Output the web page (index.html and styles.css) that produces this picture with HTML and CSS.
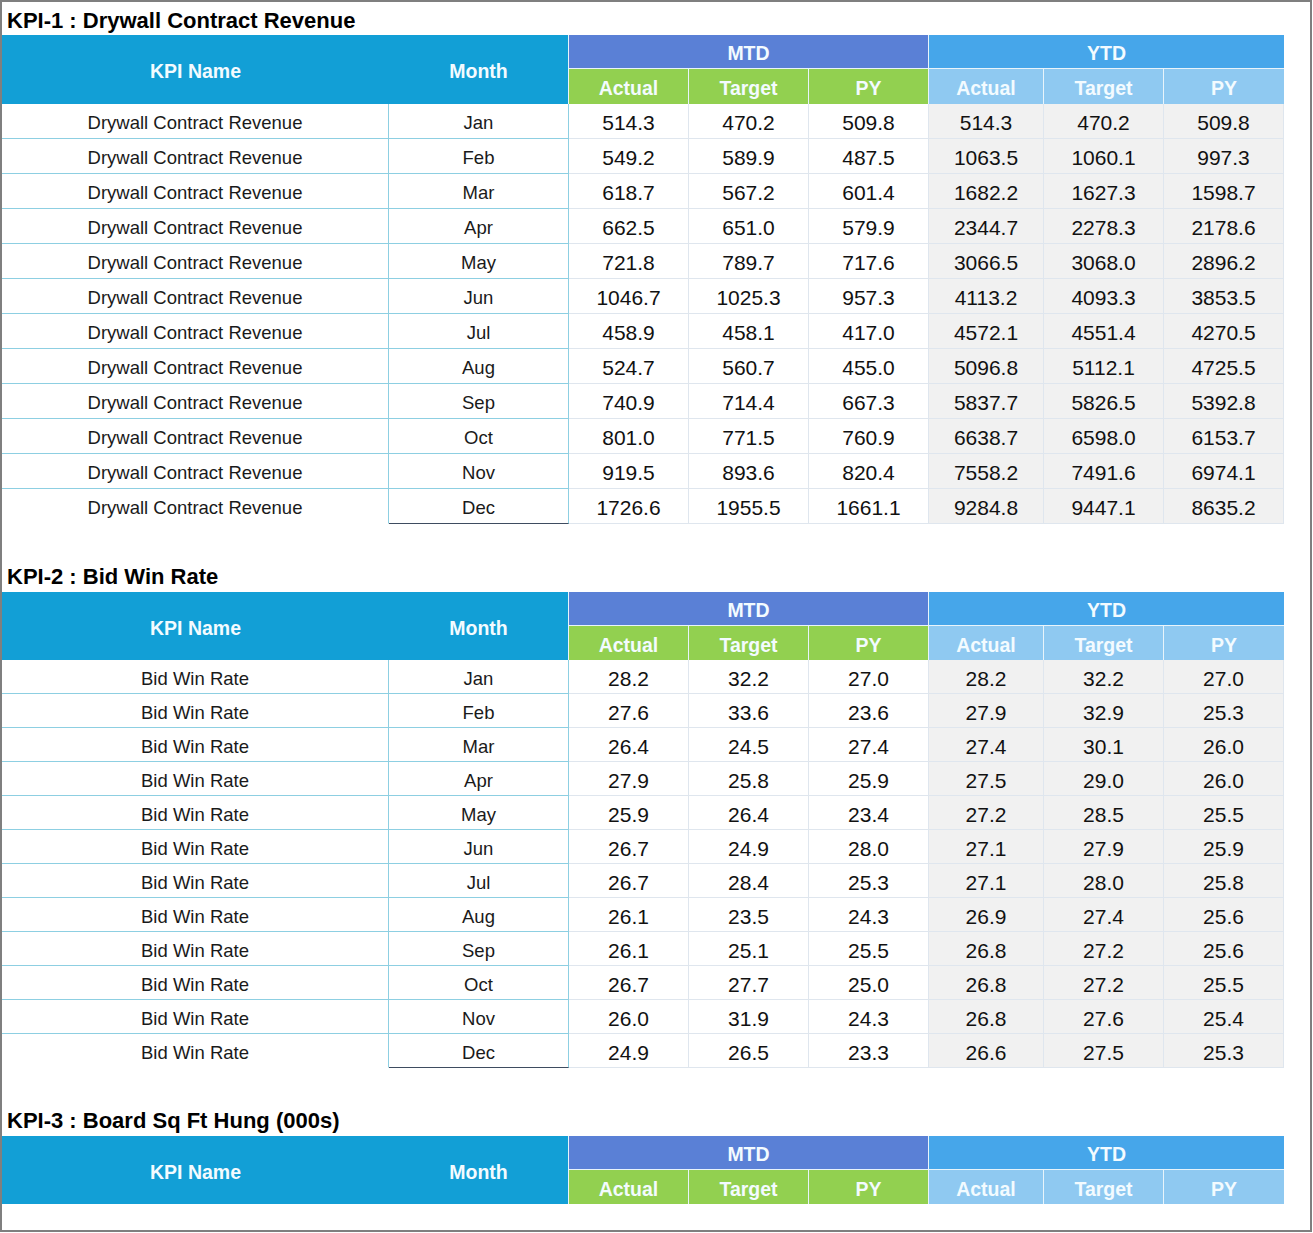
FILE: index.html
```html
<!DOCTYPE html>
<html lang="en">
<head>
<meta charset="utf-8">
<title>KPI Tables</title>
<link rel="stylesheet" href="styles.css">
</head>
<body>
<div class="sheet">

  <section class="kpi">
    <h2 class="kpi-title kpi-title--first">KPI-1 : Drywall Contract Revenue</h2>
    <div class="grid">
      <div class="h h-name">KPI Name</div>
      <div class="h h-month">Month</div>
      <div class="h h-mtd">MTD</div>
      <div class="h h-ytd">YTD</div>
      <div class="h h-sub-m">Actual</div><div class="h h-sub-m">Target</div><div class="h h-sub-m">PY</div>
      <div class="h h-sub-y">Actual</div><div class="h h-sub-y">Target</div><div class="h h-sub-y h-end">PY</div>

      <div class="c c-name">Drywall Contract Revenue</div><div class="c c-month">Jan</div><div class="c c-num">514.3</div><div class="c c-num">470.2</div><div class="c c-num">509.8</div><div class="c c-num c-ytd">514.3</div><div class="c c-num c-ytd">470.2</div><div class="c c-num c-ytd">509.8</div>
      <div class="c c-name">Drywall Contract Revenue</div><div class="c c-month">Feb</div><div class="c c-num">549.2</div><div class="c c-num">589.9</div><div class="c c-num">487.5</div><div class="c c-num c-ytd">1063.5</div><div class="c c-num c-ytd">1060.1</div><div class="c c-num c-ytd">997.3</div>
      <div class="c c-name">Drywall Contract Revenue</div><div class="c c-month">Mar</div><div class="c c-num">618.7</div><div class="c c-num">567.2</div><div class="c c-num">601.4</div><div class="c c-num c-ytd">1682.2</div><div class="c c-num c-ytd">1627.3</div><div class="c c-num c-ytd">1598.7</div>
      <div class="c c-name">Drywall Contract Revenue</div><div class="c c-month">Apr</div><div class="c c-num">662.5</div><div class="c c-num">651.0</div><div class="c c-num">579.9</div><div class="c c-num c-ytd">2344.7</div><div class="c c-num c-ytd">2278.3</div><div class="c c-num c-ytd">2178.6</div>
      <div class="c c-name">Drywall Contract Revenue</div><div class="c c-month">May</div><div class="c c-num">721.8</div><div class="c c-num">789.7</div><div class="c c-num">717.6</div><div class="c c-num c-ytd">3066.5</div><div class="c c-num c-ytd">3068.0</div><div class="c c-num c-ytd">2896.2</div>
      <div class="c c-name">Drywall Contract Revenue</div><div class="c c-month">Jun</div><div class="c c-num">1046.7</div><div class="c c-num">1025.3</div><div class="c c-num">957.3</div><div class="c c-num c-ytd">4113.2</div><div class="c c-num c-ytd">4093.3</div><div class="c c-num c-ytd">3853.5</div>
      <div class="c c-name">Drywall Contract Revenue</div><div class="c c-month">Jul</div><div class="c c-num">458.9</div><div class="c c-num">458.1</div><div class="c c-num">417.0</div><div class="c c-num c-ytd">4572.1</div><div class="c c-num c-ytd">4551.4</div><div class="c c-num c-ytd">4270.5</div>
      <div class="c c-name">Drywall Contract Revenue</div><div class="c c-month">Aug</div><div class="c c-num">524.7</div><div class="c c-num">560.7</div><div class="c c-num">455.0</div><div class="c c-num c-ytd">5096.8</div><div class="c c-num c-ytd">5112.1</div><div class="c c-num c-ytd">4725.5</div>
      <div class="c c-name">Drywall Contract Revenue</div><div class="c c-month">Sep</div><div class="c c-num">740.9</div><div class="c c-num">714.4</div><div class="c c-num">667.3</div><div class="c c-num c-ytd">5837.7</div><div class="c c-num c-ytd">5826.5</div><div class="c c-num c-ytd">5392.8</div>
      <div class="c c-name">Drywall Contract Revenue</div><div class="c c-month">Oct</div><div class="c c-num">801.0</div><div class="c c-num">771.5</div><div class="c c-num">760.9</div><div class="c c-num c-ytd">6638.7</div><div class="c c-num c-ytd">6598.0</div><div class="c c-num c-ytd">6153.7</div>
      <div class="c c-name">Drywall Contract Revenue</div><div class="c c-month">Nov</div><div class="c c-num">919.5</div><div class="c c-num">893.6</div><div class="c c-num">820.4</div><div class="c c-num c-ytd">7558.2</div><div class="c c-num c-ytd">7491.6</div><div class="c c-num c-ytd">6974.1</div>
      <div class="c c-name is-last">Drywall Contract Revenue</div><div class="c c-month is-last">Dec</div><div class="c c-num">1726.6</div><div class="c c-num">1955.5</div><div class="c c-num">1661.1</div><div class="c c-num c-ytd">9284.8</div><div class="c c-num c-ytd">9447.1</div><div class="c c-num c-ytd">8635.2</div>
    </div>
  </section>

  <section class="kpi">
    <h2 class="kpi-title">KPI-2 : Bid Win Rate</h2>
    <div class="grid grid--compact">
      <div class="h h-name">KPI Name</div>
      <div class="h h-month">Month</div>
      <div class="h h-mtd">MTD</div>
      <div class="h h-ytd">YTD</div>
      <div class="h h-sub-m">Actual</div><div class="h h-sub-m">Target</div><div class="h h-sub-m">PY</div>
      <div class="h h-sub-y">Actual</div><div class="h h-sub-y">Target</div><div class="h h-sub-y h-end">PY</div>

      <div class="c c-name">Bid Win Rate</div><div class="c c-month">Jan</div><div class="c c-num">28.2</div><div class="c c-num">32.2</div><div class="c c-num">27.0</div><div class="c c-num c-ytd">28.2</div><div class="c c-num c-ytd">32.2</div><div class="c c-num c-ytd">27.0</div>
      <div class="c c-name">Bid Win Rate</div><div class="c c-month">Feb</div><div class="c c-num">27.6</div><div class="c c-num">33.6</div><div class="c c-num">23.6</div><div class="c c-num c-ytd">27.9</div><div class="c c-num c-ytd">32.9</div><div class="c c-num c-ytd">25.3</div>
      <div class="c c-name">Bid Win Rate</div><div class="c c-month">Mar</div><div class="c c-num">26.4</div><div class="c c-num">24.5</div><div class="c c-num">27.4</div><div class="c c-num c-ytd">27.4</div><div class="c c-num c-ytd">30.1</div><div class="c c-num c-ytd">26.0</div>
      <div class="c c-name">Bid Win Rate</div><div class="c c-month">Apr</div><div class="c c-num">27.9</div><div class="c c-num">25.8</div><div class="c c-num">25.9</div><div class="c c-num c-ytd">27.5</div><div class="c c-num c-ytd">29.0</div><div class="c c-num c-ytd">26.0</div>
      <div class="c c-name">Bid Win Rate</div><div class="c c-month">May</div><div class="c c-num">25.9</div><div class="c c-num">26.4</div><div class="c c-num">23.4</div><div class="c c-num c-ytd">27.2</div><div class="c c-num c-ytd">28.5</div><div class="c c-num c-ytd">25.5</div>
      <div class="c c-name">Bid Win Rate</div><div class="c c-month">Jun</div><div class="c c-num">26.7</div><div class="c c-num">24.9</div><div class="c c-num">28.0</div><div class="c c-num c-ytd">27.1</div><div class="c c-num c-ytd">27.9</div><div class="c c-num c-ytd">25.9</div>
      <div class="c c-name">Bid Win Rate</div><div class="c c-month">Jul</div><div class="c c-num">26.7</div><div class="c c-num">28.4</div><div class="c c-num">25.3</div><div class="c c-num c-ytd">27.1</div><div class="c c-num c-ytd">28.0</div><div class="c c-num c-ytd">25.8</div>
      <div class="c c-name">Bid Win Rate</div><div class="c c-month">Aug</div><div class="c c-num">26.1</div><div class="c c-num">23.5</div><div class="c c-num">24.3</div><div class="c c-num c-ytd">26.9</div><div class="c c-num c-ytd">27.4</div><div class="c c-num c-ytd">25.6</div>
      <div class="c c-name">Bid Win Rate</div><div class="c c-month">Sep</div><div class="c c-num">26.1</div><div class="c c-num">25.1</div><div class="c c-num">25.5</div><div class="c c-num c-ytd">26.8</div><div class="c c-num c-ytd">27.2</div><div class="c c-num c-ytd">25.6</div>
      <div class="c c-name">Bid Win Rate</div><div class="c c-month">Oct</div><div class="c c-num">26.7</div><div class="c c-num">27.7</div><div class="c c-num">25.0</div><div class="c c-num c-ytd">26.8</div><div class="c c-num c-ytd">27.2</div><div class="c c-num c-ytd">25.5</div>
      <div class="c c-name">Bid Win Rate</div><div class="c c-month">Nov</div><div class="c c-num">26.0</div><div class="c c-num">31.9</div><div class="c c-num">24.3</div><div class="c c-num c-ytd">26.8</div><div class="c c-num c-ytd">27.6</div><div class="c c-num c-ytd">25.4</div>
      <div class="c c-name is-last">Bid Win Rate</div><div class="c c-month is-last">Dec</div><div class="c c-num">24.9</div><div class="c c-num">26.5</div><div class="c c-num">23.3</div><div class="c c-num c-ytd">26.6</div><div class="c c-num c-ytd">27.5</div><div class="c c-num c-ytd">25.3</div>
    </div>
  </section>

  <section class="kpi">
    <h2 class="kpi-title">KPI-3 : Board Sq Ft Hung (000s)</h2>
    <div class="grid grid--compact">
      <div class="h h-name">KPI Name</div>
      <div class="h h-month">Month</div>
      <div class="h h-mtd">MTD</div>
      <div class="h h-ytd">YTD</div>
      <div class="h h-sub-m">Actual</div><div class="h h-sub-m">Target</div><div class="h h-sub-m">PY</div>
      <div class="h h-sub-y">Actual</div><div class="h h-sub-y">Target</div><div class="h h-sub-y h-end">PY</div>
    </div>
  </section>

</div>
</body>
</html>
```

FILE: styles.css
```css
* {
  box-sizing: border-box;
}

html,
body {
  margin: 0;
  padding: 0;
  background: #ffffff;
}

body {
  font-family: "Liberation Sans", Arial, sans-serif;
  color: #111111;
}

.sheet {
  width: 1312px;
  height: 1232px;
  border: 2px solid #7f7f7f;
  overflow: hidden;
  background: #ffffff;
}

.kpi + .kpi {
  margin-top: 33px;
}

.kpi-title {
  margin: 0;
  height: 35px;
  padding: 4px 0 0 5px;
  display: flex;
  align-items: center;
  font-size: 22px;
  font-weight: bold;
  color: #000000;
  white-space: nowrap;
}

.kpi-title--first {
  height: 33px;
}

.grid {
  display: grid;
  grid-template-columns: 387px 180px 120px 120px 120px 115px 120px 120px;
  grid-template-rows: 34px 35px;
  grid-auto-rows: 35px;
  width: 1282px;
}

.grid--compact {
  grid-template-rows: 34px 34px;
  grid-auto-rows: 34px;
}

.h {
  display: flex;
  align-items: center;
  justify-content: center;
  padding-top: 4px;
  color: #f3fbff;
  font-weight: bold;
  font-size: 19.5px;
  white-space: nowrap;
}

.h-name {
  grid-row: 1 / 3;
  grid-column: 1;
  background: #129fd6;
}

.h-month {
  grid-row: 1 / 3;
  grid-column: 2;
  background: #129fd6;
  border-right: 1px solid #e8f4fb;
}

.h-mtd {
  grid-row: 1;
  grid-column: 3 / 6;
  background: #5a80d6;
  border-right: 1px solid #e8f4fb;
  border-bottom: 1px solid #e8f4fb;
}

.h-ytd {
  grid-row: 1;
  grid-column: 6 / 9;
  background: #46a6ea;
  border-bottom: 1px solid #e8f4fb;
}

.h-sub-m {
  background: #92d050;
  border-right: 1px solid #e8f4fb;
}

.h-sub-y {
  background: #8fc9f1;
  border-right: 1px solid #e8f4fb;
}

.h-end {
  border-right: 0;
}

.c {
  display: flex;
  align-items: center;
  justify-content: center;
  padding-top: 4px;
  white-space: nowrap;
}

.c-name,
.c-month {
  font-size: 18.5px;
  color: #1a1a1a;
  border-bottom: 1px solid #8dcfe2;
  border-right: 1px solid #8dcfe2;
}

.c-name.is-last {
  border-bottom-color: #ffffff;
}

.c-month.is-last {
  border-bottom-color: #3e4c60;
}

.c-num {
  font-size: 21px;
  color: #111111;
  border-bottom: 1px solid #dfe6ee;
  border-right: 1px solid #dfe6ee;
}

.c-ytd {
  background: #f1f1f1;
}
```
